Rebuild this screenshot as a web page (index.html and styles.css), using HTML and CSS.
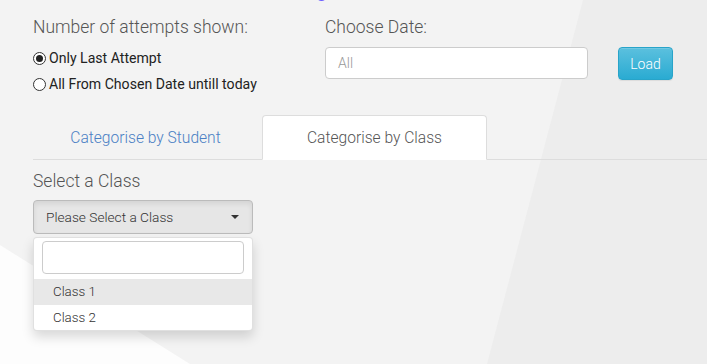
FILE: index.html
```html
<!DOCTYPE html>
<html>
<head>
<meta charset="utf-8">
<link rel="stylesheet" href="styles.css">
</head>
<body>
<svg class="bg" width="707" height="364" viewBox="0 0 707 364" preserveAspectRatio="none">
  <polygon points="583,0 707,0 707,364 487,364" fill="#ededed"/>
  <polygon points="0,245 190,364 0,364" fill="#fdfdfd"/>
</svg>
<div class="blip"></div>
<main class="page">
  <section class="top">
    <div class="col-left">
      <div class="heading">Number of attempts shown:</div>
      <label class="radio-row"><span class="radio checked"></span>Only Last Attempt</label>
      <label class="radio-row"><span class="radio"></span>All From Chosen Date untill today</label>
    </div>
    <div class="col-right">
      <div class="heading">Choose Date:</div>
      <div class="date-row">
        <div class="date-input">All</div>
        <button class="btn-load">Load</button>
      </div>
    </div>
  </section>
  <nav class="tabs">
    <div class="tab">Categorise by Student</div>
    <div class="tab active">Categorise by Class</div>
  </nav>
  <section class="select-area">
    <div class="heading">Select a Class</div>
    <div class="dropdown">
      <button class="dd-btn"><span>Please Select a Class</span><span class="caret"></span></button>
      <div class="dd-menu">
        <div class="dd-search"></div>
        <div class="dd-item hover">Class 1</div>
        <div class="dd-item">Class 2</div>
      </div>
    </div>
  </section>
</main>
</body>
</html>
```
FILE: styles.css
```css
html, body {
  margin: 0;
  padding: 0;
}
body {
  width: 707px;
  height: 364px;
  overflow: hidden;
  background: #f3f3f3;
  font-family: Roboto, "Liberation Sans", sans-serif;
  position: relative;
  color: #555;
}
.bg {
  position: absolute;
  left: 0;
  top: 0;
  z-index: 0;
}
.blip {
  position: absolute;
  left: 316px;
  top: -10px;
  width: 11px;
  height: 11px;
  border-radius: 50%;
  background: #6a5cff;
  z-index: 1;
}
.page {
  position: relative;
  z-index: 1;
  padding-left: 33px;
}
.heading {
  font-size: 17.5px;
  font-weight: 300;
  line-height: 20px;
  color: #555;
}
.top {
  display: flex;
  padding-top: 17px;
  height: 98px;
  box-sizing: border-box;
}
.col-left {
  width: 292px;
}
.col-left .heading {
  margin-bottom: 8px;
}
.radio-row {
  display: flex;
  align-items: center;
  height: 26px;
  font-size: 14.1px;
  color: #222;
}
.radio {
  width: 11px;
  height: 11px;
  border: 1px solid #333;
  border-radius: 50%;
  background: #fff;
  margin-right: 3px;
  position: relative;
  flex: none;
}
.radio.checked::after {
  content: "";
  position: absolute;
  left: 2px;
  top: 2px;
  width: 7px;
  height: 7px;
  border-radius: 50%;
  background: #222;
}
.col-right .heading {
  margin-bottom: 10px;
}
.date-row {
  display: flex;
  align-items: flex-start;
  gap: 30px;
}
.date-input {
  width: 263px;
  height: 32px;
  box-sizing: border-box;
  background: #fff;
  border: 1px solid #ccc;
  border-radius: 4px;
  padding-left: 12px;
  line-height: 30px;
  font-size: 14px;
  font-weight: 300;
  color: #999;
}
.btn-load {
  width: 55px;
  height: 33px;
  border: 1px solid #28a4c9;
  border-radius: 4px;
  background: linear-gradient(#5bc0de, #2aabd2);
  color: #fff;
  font-family: inherit;
  font-size: 14px;
  font-weight: 300;
  padding: 0;
  box-shadow: inset 0 1px 0 rgba(255,255,255,.15), 0 1px 1px rgba(0,0,0,.075);
}
.tabs {
  display: flex;
  margin-top: 17px;
  border-bottom: 1px solid #ddd;
  height: 44px;
  gap: 4px;
}
.tab {
  width: 225px;
  height: 45px;
  box-sizing: border-box;
  display: flex;
  align-items: center;
  justify-content: center;
  font-size: 15.6px;
  font-weight: 300;
  color: #4a7fc4;
  border: 1px solid transparent;
  border-radius: 4px 4px 0 0;
}
.tab.active {
  background: #fff;
  border-color: #ddd;
  border-bottom-color: #fff;
  color: #555;
}
.select-area {
  padding-top: 11px;
}
.select-area .heading {
  margin-bottom: 9px;
}
.dropdown {
  width: 220px;
}
.dd-btn {
  width: 220px;
  height: 34px;
  box-sizing: border-box;
  display: flex;
  align-items: center;
  justify-content: space-between;
  padding: 0 12px 0 12px;
  background: #e6e6e6;
  border: 1px solid #bbb;
  border-radius: 4px;
  box-shadow: inset 0 3px 5px rgba(0,0,0,.08);
  font-family: inherit;
  font-size: 13.7px;
  font-weight: 300;
  color: #333;
}
.caret {
  width: 0;
  height: 0;
  border-top: 4px solid #333;
  border-left: 4px solid transparent;
  border-right: 4px solid transparent;
  margin-right: 1px;
}
.dd-menu {
  margin-top: 3px;
  width: 220px;
  box-sizing: border-box;
  background: #fff;
  border: 1px solid rgba(0,0,0,.12);
  border-radius: 4px;
  box-shadow: 0 6px 12px rgba(0,0,0,.15);
  padding: 3px 0 0;
  height: 94px;
}
.dd-search {
  margin: 0 8px 5px;
  height: 33px;
  box-sizing: border-box;
  border: 1px solid #ccc;
  border-radius: 4px;
  background: #fff;
}
.dd-item {
  height: 26px;
  line-height: 26px;
  padding-left: 19px;
  font-size: 13.3px;
  font-weight: 300;
  color: #333;
}
.dd-item + .dd-item {
  height: 25px;
}
.dd-item.hover {
  background: #e8e8e8;
}
```
